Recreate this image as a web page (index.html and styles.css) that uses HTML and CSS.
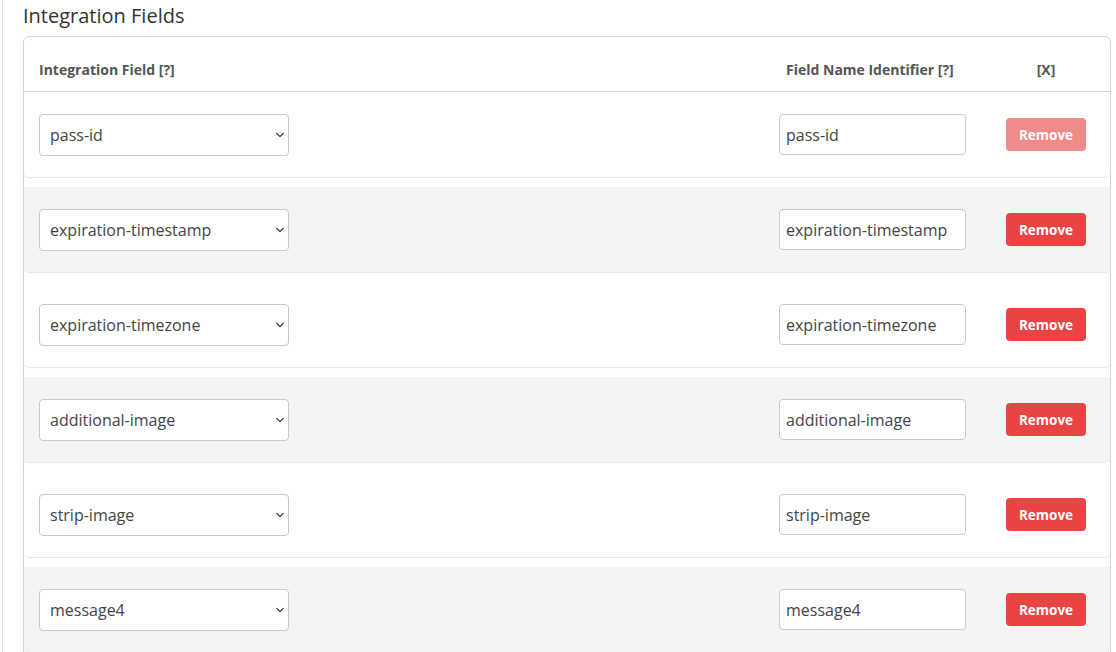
FILE: index.html
```html
<!DOCTYPE html>
<html>
<head>
<meta charset="utf-8">
<link rel="stylesheet" href="styles.css">
</head>
<body>
<div class="page">
  <h2 class="title">Integration Fields</h2>
  <div class="card">
    <div class="row head">
      <div class="hcell">Integration Field [?]</div>
      <div class="hcell name">Field Name Identifier [?]</div>
      <div class="hcell x">[X]</div>
    </div>
    <div class="row item">
      <div class="sel"><select><option>pass-id</option></select><svg class="chev" viewBox="0 0 10 6" width="10" height="6"><path d="M1 1l4 4 4-4" fill="none" stroke="#333" stroke-width="1.6" stroke-linecap="round" stroke-linejoin="round"/></svg></div>
      <input class="inp" type="text" value="pass-id">
      <div class="act"><button class="btn faded">Remove</button></div>
    </div>
    <div class="row item alt">
      <div class="sel"><select><option>expiration-timestamp</option></select><svg class="chev" viewBox="0 0 10 6" width="10" height="6"><path d="M1 1l4 4 4-4" fill="none" stroke="#333" stroke-width="1.6" stroke-linecap="round" stroke-linejoin="round"/></svg></div>
      <input class="inp" type="text" value="expiration-timestamp">
      <div class="act"><button class="btn">Remove</button></div>
    </div>
    <div class="row item">
      <div class="sel"><select><option>expiration-timezone</option></select><svg class="chev" viewBox="0 0 10 6" width="10" height="6"><path d="M1 1l4 4 4-4" fill="none" stroke="#333" stroke-width="1.6" stroke-linecap="round" stroke-linejoin="round"/></svg></div>
      <input class="inp" type="text" value="expiration-timezone">
      <div class="act"><button class="btn">Remove</button></div>
    </div>
    <div class="row item alt">
      <div class="sel"><select><option>additional-image</option></select><svg class="chev" viewBox="0 0 10 6" width="10" height="6"><path d="M1 1l4 4 4-4" fill="none" stroke="#333" stroke-width="1.6" stroke-linecap="round" stroke-linejoin="round"/></svg></div>
      <input class="inp" type="text" value="additional-image">
      <div class="act"><button class="btn">Remove</button></div>
    </div>
    <div class="row item">
      <div class="sel"><select><option>strip-image</option></select><svg class="chev" viewBox="0 0 10 6" width="10" height="6"><path d="M1 1l4 4 4-4" fill="none" stroke="#333" stroke-width="1.6" stroke-linecap="round" stroke-linejoin="round"/></svg></div>
      <input class="inp" type="text" value="strip-image">
      <div class="act"><button class="btn">Remove</button></div>
    </div>
    <div class="row item alt">
      <div class="sel"><select><option>message4</option></select><svg class="chev" viewBox="0 0 10 6" width="10" height="6"><path d="M1 1l4 4 4-4" fill="none" stroke="#333" stroke-width="1.6" stroke-linecap="round" stroke-linejoin="round"/></svg></div>
      <input class="inp" type="text" value="message4">
      <div class="act"><button class="btn">Remove</button></div>
    </div>
  </div>
</div>
</body>
</html>
```
FILE: styles.css
```css
html, body {
  margin: 0;
  padding: 0;
  background: #fff;
  font-family: "Open Sans", "Liberation Sans", sans-serif;
  color: #333;
  overflow: hidden;
  height: 652px;
}
.page {
  margin-left: 2px;
  border-left: 1px solid #e3e3ee;
  padding: 0 0 0 20px;
  height: 652px;
  overflow: hidden;
  box-sizing: border-box;
}
.title {
  margin: 0;
  padding-top: 3px;
  height: 36px;
  font-size: 20px;
  font-weight: 400;
  color: #333;
  line-height: 26px;
  box-sizing: border-box;
}
.card {
  width: 1088px;
  border: 1px solid #d2d2d8;
  border-radius: 6px;
  box-sizing: border-box;
}
.row {
  display: grid;
  grid-template-columns: 1fr 187px 120px;
  column-gap: 20px;
  padding: 0 4px 0 15px;
  align-items: center;
}
.head {
  height: 55px;
  border-bottom: 1px solid #d2d2d8;
  box-sizing: border-box;
  padding-top: 11px;
}
.hcell {
  font-size: 14px;
  font-weight: 700;
  color: #555;
}
.hcell.name { padding-left: 7px; }
.hcell.x { text-align: center; }
.item {
  height: 85px;
  margin-bottom: 10px;
  border-radius: 0 0 5px 5px;
  box-shadow: 0 1px 1px #e4e4f0;
  background: #fff;
}
.item.alt { background: #f4f4f4; }
.sel {
  position: relative;
  width: 250px;
}
.sel select {
  appearance: none;
  -webkit-appearance: none;
  width: 250px;
  height: 42px;
  border: 1px solid #c8c8c8;
  border-radius: 4px;
  background: #fff;
  font-family: "Open Sans", "Liberation Sans", sans-serif;
  font-size: 16px;
  color: #444;
  padding: 0 10px;
  margin: 0;
  box-sizing: border-box;
  display: block;
}
.chev {
  position: absolute;
  right: 5px;
  top: 18px;
  width: 8px;
  height: 6px;
}
.inp {
  width: 187px;
  height: 41px;
  border: 1px solid #c8c8c8;
  border-radius: 4px;
  padding: 0 6px;
  margin: 0;
  font-family: "Open Sans", "Liberation Sans", sans-serif;
  font-size: 16px;
  color: #444;
  box-sizing: border-box;
  background: #fff;
}
.act {
  display: flex;
  justify-content: center;
}
.btn {
  width: 80px;
  height: 33px;
  border: none;
  border-radius: 4px;
  background: #e94444;
  color: #fff;
  font-family: "Open Sans", "Liberation Sans", sans-serif;
  font-size: 13.5px;
  font-weight: 700;
  padding: 0;
  margin: 0;
}
.btn.faded { background: #f28a8a; }
```
